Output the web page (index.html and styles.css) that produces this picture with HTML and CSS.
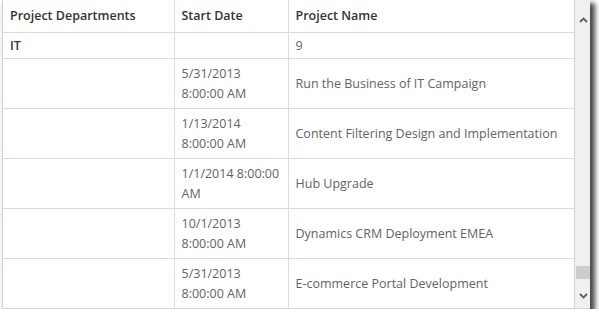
FILE: index.html
```html
<!DOCTYPE html>
<html>
<head>
<meta charset="utf-8">
<link rel="stylesheet" href="styles.css">
</head>
<body>
<div class="window">
  <div class="grid-wrap">
    <table class="grid">
      <colgroup>
        <col class="c1"><col class="c2"><col class="c3">
      </colgroup>
      <thead>
        <tr class="head"><th>Project Departments</th><th>Start Date</th><th>Project Name</th></tr>
      </thead>
      <tbody>
        <tr class="group"><td class="dept">IT</td><td></td><td>9</td></tr>
        <tr class="row"><td></td><td>5/31/2013 8:00:00 AM</td><td>Run the Business of IT Campaign</td></tr>
        <tr class="row"><td></td><td>1/13/2014 8:00:00 AM</td><td>Content Filtering Design and Implementation</td></tr>
        <tr class="row"><td></td><td>1/1/2014 8:00:00 AM</td><td>Hub Upgrade</td></tr>
        <tr class="row"><td></td><td>10/1/2013 8:00:00 AM</td><td>Dynamics CRM Deployment EMEA</td></tr>
        <tr class="row"><td></td><td>5/31/2013 8:00:00 AM</td><td>E-commerce Portal Development</td></tr>
      </tbody>
    </table>
  </div>
  <div class="scrollbar">
    <svg class="arrow" width="9" height="6" viewBox="0 0 9 6"><path d="M1 5 L4.5 1.5 L8 5" fill="none" stroke="#5f5f5f" stroke-width="1.8"/></svg>
    <div class="track"><div class="thumb"></div></div>
    <svg class="arrow" width="9" height="6" viewBox="0 0 9 6"><path d="M1 1 L4.5 4.5 L8 1" fill="none" stroke="#5f5f5f" stroke-width="1.8"/></svg>
  </div>
</div>
</body>
</html>
```
FILE: styles.css
```css
html, body {
  margin: 0;
  padding: 0;
  background: #ffffff;
}
body {
  font-family: "Open Sans", "Noto Sans", sans-serif;
  font-size: 12.5px;
}
.window {
  margin-left: 2px;
  width: 588px;
  height: 309px;
  display: flex;
  background: #fff;
  border-left: 1px solid #cdd6df;
  border-bottom: 1px solid #cdd6df;
  box-sizing: border-box;
  box-shadow: 4px 4px 5px 1px rgba(0, 0, 0, 0.72);
  overflow: hidden;
}
.grid-wrap {
  width: 571px;
  flex: none;
  border-right: 1px solid #cdd6df;
  overflow: hidden;
}
.grid {
  border-collapse: collapse;
  table-layout: fixed;
  width: 571px;
}
.c1 { width: 171px; }
.c2 { width: 114px; }
.c3 { width: 286px; }
.grid th, .grid td {
  border-right: 1px solid #d5dde5;
  border-bottom: 1px solid #d5dde5;
  padding: 0 6px 0 7px;
  text-align: left;
  vertical-align: middle;
  color: #636363;
  font-weight: 400;
  line-height: 20px;
}
.grid th:last-child, .grid td:last-child { border-right: none; }
.grid th {
  height: 32px;
  color: #333333;
  font-weight: 600;
}
.grid .group td { height: 25px; }
.grid .group .dept { color: #333; font-weight: 600; }
.grid .row td { height: 49px; }
.scrollbar {
  width: 16px;
  flex: none;
  background: #f0f0f0;
  display: flex;
  flex-direction: column;
  align-items: center;
  padding: 17px 0 9px;
  box-sizing: border-box;
}
.track {
  flex: 1;
  width: 100%;
  display: flex;
  flex-direction: column;
  justify-content: flex-end;
  padding: 0 1px 14px;
  box-sizing: border-box;
}
.thumb {
  height: 13px;
  background: #cdcdcd;
}
```
